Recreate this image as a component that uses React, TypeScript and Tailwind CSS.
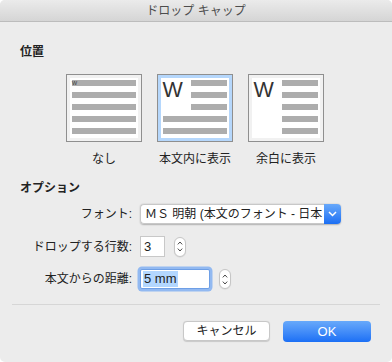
import React from "react";

const FONT = { fontFamily: '"Liberation Sans", "Noto Sans CJK JP", sans-serif' };

type Kind = "none" | "inline" | "margin";

function DropIcon({ kind, selected }: { kind: Kind; selected?: boolean }) {
    const bar = "#adadad";
    const ring = selected ? "#b5d7fc" : "#f1f1f1";
    return (
        <svg width="76" height="68" viewBox="0 0 76 68">
            <rect x="0.5" y="0.5" width="75" height="67" fill={ring} stroke="#8f8f8f" />
            <rect x="4" y="4" width="68" height="60" fill="#ffffff" />
            {kind === "none" && (
                <>
                    {[6, 18, 30, 42, 54].map((y) => (
                        <rect key={y} x="6" y={y} width="64" height="6" fill={bar} />
                    ))}
                    <text x="6" y="11" fontSize="7" fill="#444" fontFamily="Liberation Sans">w</text>
                </>
            )}
            {kind === "inline" && (
                <>
                    {[6, 18, 30].map((y) => (
                        <rect key={y} x="34" y={y} width="36" height="6" fill={bar} />
                    ))}
                    {[42, 54].map((y) => (
                        <rect key={y} x="6" y={y} width="64" height="6" fill={bar} />
                    ))}
                    <text x="5.5" y="22.5" fontSize="21.5" fill="#333" fontFamily="Liberation Sans">W</text>
                </>
            )}
            {kind === "margin" && (
                <>
                    {[6, 18, 30, 42, 54].map((y) => (
                        <rect key={y} x="34" y={y} width="36" height="6" fill={bar} />
                    ))}
                    <text x="5.5" y="22.5" fontSize="21.5" fill="#333" fontFamily="Liberation Sans">W</text>
                </>
            )}
        </svg>
    );
}

function Stepper() {
    return (
        <div className="w-[12px] h-[20px] rounded-full bg-white border border-[#c6c6c6] shadow-[0_0.5px_1px_rgba(0,0,0,0.1)] flex flex-col items-center justify-center gap-[3px]">
            <svg width="6" height="4" viewBox="0 0 6 4">
                <polyline points="0.8,3.4 3,1 5.2,3.4" fill="none" stroke="#4a4a4a" strokeWidth="1" />
            </svg>
            <svg width="6" height="4" viewBox="0 0 6 4">
                <polyline points="0.8,0.6 3,3 5.2,0.6" fill="none" stroke="#4a4a4a" strokeWidth="1" />
            </svg>
        </div>
    );
}

export default function App() {
    return (
        <div style={FONT} className="w-[392px] h-[362px] flex flex-col bg-[#ececec] rounded-[5px] overflow-hidden text-[#222]">
            {/* title bar */}
            <div className="h-[22px] shrink-0 flex items-center justify-center bg-linear-to-b from-[#ebebeb] to-[#d5d5d5] border-b border-[#bcbcbc]">
                <span className="text-[12px] text-[#4d4d4d] leading-none">ドロップ キャップ</span>
            </div>

            {/* 位置 */}
            <div className="px-[20px] mt-[22px] text-[12px] leading-[16px] font-bold">位置</div>
            <div className="flex gap-[15px] pl-[66px] mt-[14px]">
                {([
                    ["none", "なし", false],
                    ["inline", "本文内に表示", true],
                    ["margin", "余白に表示", false],
                ] as [Kind, string, boolean][]).map(([k, label, sel]) => (
                    <div key={k} className="w-[76px] flex flex-col items-center">
                        <DropIcon kind={k} selected={sel} />
                        <div className="mt-[9px] text-[12px] leading-[16px] whitespace-nowrap">{label}</div>
                    </div>
                ))}
            </div>

            {/* オプション */}
            <div className="px-[20px] mt-[13px] text-[12px] leading-[16px] font-bold">オプション</div>

            <div className="flex items-center gap-[8px] pl-[20px] mt-[8px] h-[20px]">
                <div className="w-[112px] text-right text-[12px]">フォント:</div>
                <div className="flex h-[20px] w-[201px] rounded-[4px] shadow-[0_0.5px_1.5px_rgba(0,0,0,0.25)]">
                    <div className="flex-1 bg-white border border-[#c8c8c8] border-r-0 rounded-l-[4px] pl-[4px] flex items-center overflow-hidden whitespace-nowrap text-[12px]">
                        ＭＳ 明朝 (本文のフォント - 日本
                    </div>
                    <div className="w-[17px] rounded-r-[4px] bg-linear-to-b from-[#67a8fa] to-[#1a6ef3] flex items-center justify-center">
                        <svg width="9" height="6" viewBox="0 0 9 6">
                            <polyline points="1,1 4.5,4.5 8,1" fill="none" stroke="#fff" strokeWidth="1.5" />
                        </svg>
                    </div>
                </div>
            </div>

            <div className="flex items-center gap-[8px] pl-[20px] mt-[12px] h-[21px]">
                <div className="w-[112px] text-right text-[12px]">ドロップする行数:</div>
                <div className="w-[25px] h-[21px] bg-white border border-[#c8c8c8] pl-[3px] flex items-center text-[13px]">3</div>
                <div className="ml-[1px]">
                    <Stepper />
                </div>
            </div>

            <div className="flex items-center gap-[8px] pl-[20px] mt-[12px] h-[20px]">
                <div className="w-[112px] text-right text-[12px]">本文からの距離:</div>
                <div className="w-[70px] h-[20px] bg-white border border-[#6e9fe6] rounded-[2px] shadow-[0_0_0_2.5px_#92b9f1] pl-[2px] flex items-center text-[13px]">
                    <span className="bg-[#b3d7ff] px-[1px] leading-[16px]">5 mm</span>
                </div>
                <div className="ml-[1px]">
                    <Stepper />
                </div>
            </div>

            <div className="mx-[12px] mt-[15px] h-px bg-[#d6d6d6]" />

            <div className="flex justify-end gap-[13px] pr-[21px] mt-[16px]">
                <button className="w-[87px] h-[20px] bg-white border border-[#c8c8c8] rounded-[4px] shadow-[0_0.5px_1px_rgba(0,0,0,0.15)] text-[12px] leading-none text-[#222]">
                    キャンセル
                </button>
                <button className="w-[88px] h-[21px] rounded-[4px] bg-linear-to-b from-[#68a9fa] to-[#1b6ff5] text-white text-[13px] leading-none">
                    OK
                </button>
            </div>
        </div>
    );
}
